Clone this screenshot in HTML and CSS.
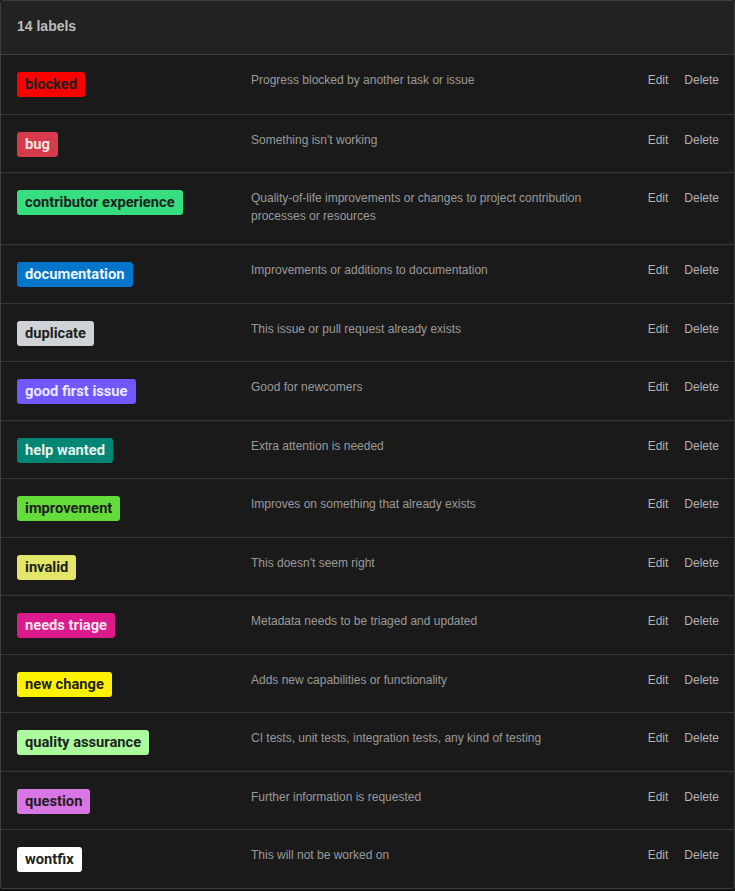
FILE: index.html
```html
<!DOCTYPE html>
<html>
<head>
<meta charset="utf-8">
<link rel="stylesheet" href="styles.css">
</head>
<body>
<div class="box">
  <div class="box-header">14 labels</div>
  <ul class="label-list">
    <li class="row"><div class="name"><span class="label l-blocked">blocked</span></div><div class="desc">Progress blocked by another task or issue</div><div class="actions"><a>Edit</a><a>Delete</a></div></li>
    <li class="row"><div class="name"><span class="label l-bug">bug</span></div><div class="desc">Something isn't working</div><div class="actions"><a>Edit</a><a>Delete</a></div></li>
    <li class="row"><div class="name"><span class="label l-contrib">contributor experience</span></div><div class="desc">Quality-of-life improvements or changes to project contribution processes or resources</div><div class="actions"><a>Edit</a><a>Delete</a></div></li>
    <li class="row"><div class="name"><span class="label l-docs">documentation</span></div><div class="desc">Improvements or additions to documentation</div><div class="actions"><a>Edit</a><a>Delete</a></div></li>
    <li class="row"><div class="name"><span class="label l-dup">duplicate</span></div><div class="desc">This issue or pull request already exists</div><div class="actions"><a>Edit</a><a>Delete</a></div></li>
    <li class="row"><div class="name"><span class="label l-gfi">good first issue</span></div><div class="desc">Good for newcomers</div><div class="actions"><a>Edit</a><a>Delete</a></div></li>
    <li class="row"><div class="name"><span class="label l-help">help wanted</span></div><div class="desc">Extra attention is needed</div><div class="actions"><a>Edit</a><a>Delete</a></div></li>
    <li class="row"><div class="name"><span class="label l-impr">improvement</span></div><div class="desc">Improves on something that already exists</div><div class="actions"><a>Edit</a><a>Delete</a></div></li>
    <li class="row"><div class="name"><span class="label l-invalid">invalid</span></div><div class="desc">This doesn't seem right</div><div class="actions"><a>Edit</a><a>Delete</a></div></li>
    <li class="row"><div class="name"><span class="label l-triage">needs triage</span></div><div class="desc">Metadata needs to be triaged and updated</div><div class="actions"><a>Edit</a><a>Delete</a></div></li>
    <li class="row"><div class="name"><span class="label l-new">new change</span></div><div class="desc">Adds new capabilities or functionality</div><div class="actions"><a>Edit</a><a>Delete</a></div></li>
    <li class="row"><div class="name"><span class="label l-qa">quality assurance</span></div><div class="desc">CI tests, unit tests, integration tests, any kind of testing</div><div class="actions"><a>Edit</a><a>Delete</a></div></li>
    <li class="row"><div class="name"><span class="label l-question">question</span></div><div class="desc">Further information is requested</div><div class="actions"><a>Edit</a><a>Delete</a></div></li>
    <li class="row"><div class="name"><span class="label l-wontfix">wontfix</span></div><div class="desc">This will not be worked on</div><div class="actions"><a>Edit</a><a>Delete</a></div></li>
  </ul>
</div>
</body>
</html>
```
FILE: styles.css
```css
* { box-sizing: border-box; }
html, body {
  margin: 0;
  padding: 0;
  background: #141414;
  font-family: "Liberation Sans", Arial, sans-serif;
}
.box {
  width: 735px;
  border: 1px solid #3d3d3d;
  border-radius: 3px;
  background: #1a1a1a;
  overflow: hidden;
}
.box-header {
  background: #222222;
  padding: 15px 16px 17px;
  font-size: 14px;
  line-height: 21px;
  font-weight: bold;
  color: #bdbdbd;
  border-bottom: 1px solid #3d3d3d;
}
.label-list {
  list-style: none;
  margin: 0;
  padding: 0;
}
.row {
  display: flex;
  align-items: flex-start;
  padding: 16px 15px 15px 16px;
  min-height: 58.5px;
  border-top: 1px solid #393939;
}
.row:first-child { border-top: 0; }
.name {
  width: 234px;
  flex: none;
  padding-top: 1px;
}
.label {
  display: inline-block;
  font-family: Roboto, "Liberation Sans", sans-serif;
  font-weight: bold;
  font-size: 14.7px;
  line-height: 21px;
  padding: 2px 8px;
  border-radius: 3px;
}
.desc {
  flex: 1;
  padding: 0 16px 4px 0;
  font-size: 12px;
  line-height: 18px;
  color: #9a9a9a;
}
.actions {
  flex: none;
  display: flex;
  gap: 16px;
  font-size: 12px;
  line-height: 18px;
  color: #b3b3b3;
}
.l-blocked { background: #ff0000; color: #1e1e1e; }
.l-bug { background: #d73a4a; color: #f3e4e6; }
.l-contrib { background: #36de80; color: #1f1f1f; }
.l-docs { background: #0075ca; color: #eef4fa; }
.l-dup { background: #cfd3d7; color: #1f1f1f; }
.l-gfi { background: #7057ff; color: #ece9ff; }
.l-help { background: #008672; color: #e8f2f0; }
.l-impr { background: #64dc3a; color: #1f1f1f; }
.l-invalid { background: #e4e669; color: #1f1f1f; }
.l-triage { background: #db1b8c; color: #f5e2ee; }
.l-new { background: #fff200; color: #1f1f1f; }
.l-qa { background: #aafc9c; color: #1f1f1f; }
.l-question { background: #d876e3; color: #1f1f1f; }
.l-wontfix { background: #ffffff; color: #1f1f1f; }
```
